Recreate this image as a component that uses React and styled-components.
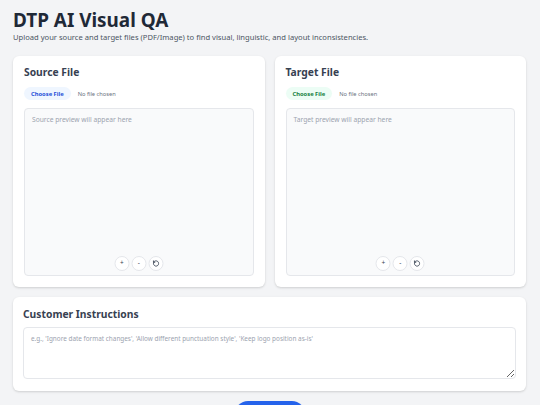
import styled, { createGlobalStyle } from "styled-components";

const GlobalStyle = createGlobalStyle`
  * { box-sizing: border-box; }
  body {
    margin: 0;
    background: #f3f4f6;
    font-family: "Noto Sans", "Open Sans", sans-serif;
    color: #1f2937;
  }
`;

const Page = styled.div`
  padding: 10px 14px 0 13px;
`;

const Header = styled.header`
  margin-bottom: 13px;
`;

const Title = styled.h1`
  margin: 0;
  font-size: 18.9px;
  line-height: 21px;
  font-weight: 700;
  color: #1f2937;
`;

const Subtitle = styled.p`
  margin: 0;
  font-size: 7.6px;
  line-height: 12px;
  color: #4b5563;
`;

const Grid = styled.div`
  display: grid;
  grid-template-columns: 1fr 1fr;
  gap: 10px;
`;

const Card = styled.section`
  background: #fff;
  border-radius: 6px;
  box-shadow: 0 1px 3px rgba(0, 0, 0, 0.1), 0 1px 2px rgba(0, 0, 0, 0.06);
  padding: 9px 11px 11px;
  display: flex;
  flex-direction: column;
`;

const CardTitle = styled.h2`
  margin: 0 0 ${({ $gap }) => $gap || 8}px;
  font-size: 10.3px;
  line-height: ${({ $line }) => $line || 14}px;
  font-weight: 700;
  color: #374151;
`;

const FileRow = styled.div`
  display: flex;
  align-items: center;
  gap: 7px;
  margin-bottom: 8px;
`;

const ChooseButton = styled.button`
  border: none;
  border-radius: 999px;
  height: 13px;
  padding: 0 7px;
  font-family: inherit;
  font-size: 5.8px;
  font-weight: 700;
  background: ${({ $tone }) => ($tone === "green" ? "#ecfdf5" : "#eff6ff")};
  color: ${({ $tone }) => ($tone === "green" ? "#15803d" : "#1d4ed8")};
`;

const NoFile = styled.span`
  font-size: 5.7px;
  color: #6b7280;
`;

const Preview = styled.div`
  position: relative;
  height: 168px;
  background: #f9fafb;
  border: 1px solid #e5e7eb;
  border-radius: 4px;
  padding: 6px 7px;
  font-size: 6.7px;
  color: #9ca3af;
`;

const Zoom = styled.div`
  position: absolute;
  left: 50%;
  bottom: 4px;
  transform: translateX(-50%);
  display: flex;
  gap: 2px;
`;

const ZoomButton = styled.button`
  width: 15px;
  height: 15px;
  border-radius: 50%;
  border: 1px solid #e5e7eb;
  background: #fff;
  padding: 0;
  font-family: inherit;
  font-size: 6.5px;
  line-height: 1;
  color: #374151;
  display: flex;
  align-items: center;
  justify-content: center;
`;

const Instructions = styled(Card)`
  margin-top: 10px;
  padding: 9px 10px 12px;
`;

const TextArea = styled.textarea`
  display: block;
  height: 52px;
  width: 100%;
  resize: vertical;
  border: 1px solid #e5e7eb;
  border-radius: 4px;
  padding: 6px 7px;
  font-family: inherit;
  font-size: 6.4px;
  color: #374151;
  &::placeholder {
    color: #9ca3af;
  }
`;

const Actions = styled.div`
  display: flex;
  justify-content: center;
  margin-top: 10px;
`;

const Submit = styled.button`
  border: none;
  border-radius: 999px;
  width: 70px;
  height: 26px;
  background: #2563eb;
  color: #fff;
  font-family: inherit;
  font-size: 8px;
  font-weight: 700;
`;

const ResetIcon = () => (
  <svg width="7" height="7" viewBox="0 0 24 24" fill="none" stroke="currentColor" strokeWidth="3" strokeLinecap="round" strokeLinejoin="round">
    <path d="M3 12a9 9 0 1 0 3-6.7L3 8" />
    <path d="M3 3v5h5" />
  </svg>
);

const FileCard = ({ title, tone, placeholder }) => (
  <Card>
    <CardTitle>{title}</CardTitle>
    <FileRow>
      <ChooseButton $tone={tone}>Choose File</ChooseButton>
      <NoFile>No file chosen</NoFile>
    </FileRow>
    <Preview>
      {placeholder}
      <Zoom>
        <ZoomButton>+</ZoomButton>
        <ZoomButton>-</ZoomButton>
        <ZoomButton>
          <ResetIcon />
        </ZoomButton>
      </Zoom>
    </Preview>
  </Card>
);

export default function App() {
  return (
    <Page>
      <GlobalStyle />
      <Header>
        <Title>DTP AI Visual QA</Title>
        <Subtitle>
          Upload your source and target files (PDF/Image) to find visual, linguistic, and layout inconsistencies.
        </Subtitle>
      </Header>
      <Grid>
        <FileCard title="Source File" tone="blue" placeholder="Source preview will appear here" />
        <FileCard title="Target File" tone="green" placeholder="Target preview will appear here" />
      </Grid>
      <Instructions>
        <CardTitle $line={16} $gap={5}>Customer Instructions</CardTitle>
        <TextArea
          spellCheck={false}
          placeholder="e.g., 'Ignore date format changes', 'Allow different punctuation style', 'Keep logo position as-is'"
        />
      </Instructions>
      <Actions>
        <Submit>Run QA</Submit>
      </Actions>
    </Page>
  );
}
